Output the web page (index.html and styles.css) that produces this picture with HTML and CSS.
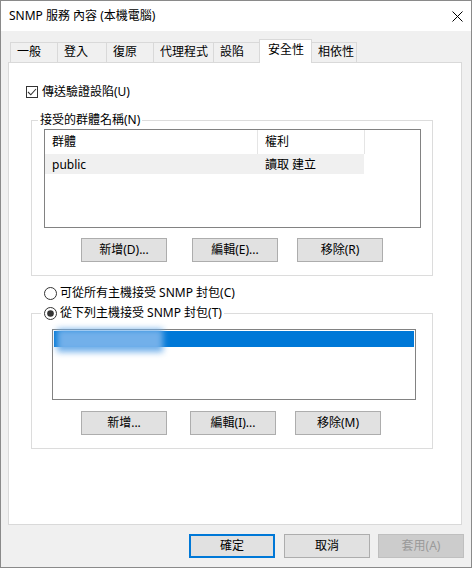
FILE: index.html
```html
<!DOCTYPE html>
<html lang="zh-Hant">
<head>
<meta charset="utf-8">
<title>SNMP 服務 內容 (本機電腦)</title>
<link rel="stylesheet" href="styles.css">
</head>
<body>
<div class="window">
  <div class="titlebar">
    <span class="title">SNMP 服務 內容 (本機電腦)</span>
    <svg class="close" width="11" height="11" viewBox="0 0 11 11"><path d="M0.5 0.5 L10.5 10.5 M10.5 0.5 L0.5 10.5" stroke="#000" stroke-width="1" fill="none"/></svg>
  </div>
  <div class="body">
    <div class="tabs">
      <div class="tab t1">一般</div>
      <div class="tab t2">登入</div>
      <div class="tab t3">復原</div>
      <div class="tab t4">代理程式</div>
      <div class="tab t5">設陷</div>
      <div class="tab t6 active">安全性</div>
      <div class="tab t7">相依性</div>
    </div>
    <div class="panel">
      <div class="check-row">
        <span class="checkbox"><svg width="12" height="12" viewBox="0 0 12 12"><path d="M2 6 L4.8 8.8 L10 3" stroke="#333" stroke-width="1.1" fill="none"/></svg></span>
        <span class="label">傳送驗證設陷(U)</span>
      </div>
      <fieldset class="group g1">
        <legend class="legend-text">接受的群體名稱(N)</legend>
        <div class="listview">
          <div class="lv-header">
            <div class="col c1">群體</div>
            <div class="col c2">權利</div>
          </div>
          <div class="lv-row">
            <div class="col c1">public</div>
            <div class="col c2">讀取 建立</div>
          </div>
        </div>
        <div class="btn-row r1">
          <button class="btn b-add1">新增(D)...</button>
          <button class="btn b-edit1">編輯(E)...</button>
          <button class="btn b-del1">移除(R)</button>
        </div>
      </fieldset>
      <div class="radio-row solo">
        <svg class="radio" width="13" height="13" viewBox="0 0 13 13"><circle cx="6.5" cy="6.5" r="6" fill="#fff" stroke="#333" stroke-width="1"/></svg>
        <span class="label">可從所有主機接受 SNMP 封包(C)</span>
      </div>
      <fieldset class="group g2">
        <legend class="radio-row legend-radio">
          <svg class="radio" width="13" height="13" viewBox="0 0 13 13"><circle cx="6.5" cy="6.5" r="6" fill="#fff" stroke="#333" stroke-width="1"/><circle cx="6.5" cy="6.5" r="3.3" fill="#333"/></svg>
          <span class="label">從下列主機接受 SNMP 封包(T)</span>
        </legend>
        <div class="listbox">
          <div class="sel"></div>
          <span class="blurred"></span>
        </div>
        <div class="btn-row r2">
          <button class="btn b-add2">新增...</button>
          <button class="btn b-edit2">編輯(I)...</button>
          <button class="btn b-del2">移除(M)</button>
        </div>
      </fieldset>
    </div>
    <div class="footer">
      <button class="btn default">確定</button>
      <button class="btn cancel">取消</button>
      <button class="btn disabled" disabled>套用(A)</button>
    </div>
  </div>
</div>
</body>
</html>
```

FILE: styles.css
```css
* { box-sizing: border-box; }
html, body { margin: 0; padding: 0; background: #fff; }
body {
  font-family: "Noto Sans", "Noto Sans CJK TC", sans-serif;
  font-size: 12px;
  color: #000;
}
.window {
  width: 472px;
  height: 568px;
  border: 1px solid #8a8a8a;
  display: flex;
  flex-direction: column;
  background: #f0f0f0;
}
.titlebar {
  height: 30px;
  flex: none;
  background: #fff;
  display: flex;
  align-items: center;
  justify-content: space-between;
  padding: 0 8px 0 8px;
}
.title { font-size: 12px; line-height: 16px; }
.close { display: block; }
.body { flex: 1; display: flex; flex-direction: column; }
.tabs {
  display: flex;
  align-items: flex-end;
  height: 23px;
  margin-top: 8px;
  margin-left: 9px;
}
.tab {
  height: 20px;
  border: 1px solid #d9d9d9;
  border-bottom: none;
  margin-right: -1px;
  padding-left: 6px;
  line-height: 18px;
  background: #f0f0f0;
  white-space: nowrap;
}
.t1 { width: 48px; }
.t2 { width: 50px; }
.t3 { width: 48px; }
.t4 { width: 61px; }
.t5 { width: 47px; }
.t6 { width: 53px; }
.t7 { width: 46px; }
.tab.active {
  height: 24px;
  margin-bottom: -1px;
  background: #fff;
  padding-left: 8px;
  line-height: 19px;
  position: relative;
  z-index: 1;
}
.panel {
  margin-left: 7px;
  width: 454px;
  height: 463px;
  border: 1px solid #d9d9d9;
  background: #fff;
  display: flex;
  flex-direction: column;
}
.check-row {
  display: flex;
  align-items: center;
  height: 16px;
  margin-top: 21px;
  padding-left: 17px;
}
.checkbox {
  width: 12px;
  height: 12px;
  border: 1px solid #333;
  display: flex;
  align-items: center;
  justify-content: center;
  margin-right: 4px;
}
.checkbox svg { display: block; flex: none; }
.label { line-height: 16px; white-space: nowrap; }
.group {
  margin: 0;
  padding: 0;
  min-width: 0;
  border: 1px solid #dcdcdc;
  width: 402px;
  margin-left: 22px;
}
.legend-text {
  line-height: 16px;
  padding: 0 2px;
  margin-left: 6px;
}
.g1 { margin-top: 12px; padding-top: 1px; padding-bottom: 13px; }
.listview {
  margin-left: 12px;
  width: 377px;
  height: 99px;
  border: 1px solid #828282;
  background: #fff;
}
.lv-header, .lv-row { display: flex; }
.lv-header { height: 24px; }
.lv-header .col { line-height: 23px; border-right: 1px solid #e5e5e5; }
.lv-row { height: 20px; width: 319px; background: #f0f0f0; }
.lv-row .col { line-height: 21px; }
.col { padding-left: 7px; white-space: nowrap; }
.col.c1 { width: 213px; }
.col.c2 { width: 107px; }
.lv-row .col.c1 { width: 213px; }
.lv-row .col.c2 { width: 106px; }
.btn-row { display: flex; }
.btn {
  font: inherit;
  font-size: 12px;
  color: #000;
  width: 86px;
  height: 24px;
  padding: 0;
  margin: 0;
  border: 1px solid #adadad;
  background: #e1e1e1;
  line-height: 20px;
  border-radius: 0;
}
.r1 { margin-top: 10px; }
.b-add1 { margin-left: 49px; }
.b-edit1 { margin-left: 25px; }
.b-del1 { margin-left: 19px; }
.radio-row {
  display: flex;
  align-items: center;
  height: 16px;
}
.radio { display: block; flex: none; margin-right: 3px; }
.solo { margin-top: 9px; padding-left: 35px; }
.g2 { margin-top: 4px; padding-top: 8px; padding-bottom: 13px; }
.legend-radio {
  padding: 0 2px 0 3px;
  margin-left: 9px;
}
.listbox {
  position: relative;
  margin-left: 20px;
  width: 364px;
  height: 71px;
  border: 1px solid #828282;
  padding: 1px;
  background: #fff;
}
.sel { height: 16px; background: #0078d7; }
.blurred {
  position: absolute;
  left: 4px;
  top: -1px;
  width: 106px;
  height: 23px;
  background: #72b0ea;
  filter: blur(3px);
}
.r2 { margin-top: 11px; }
.b-add2 { margin-left: 49px; }
.b-edit2 { margin-left: 23px; }
.b-del2 { margin-left: 19px; }
.footer {
  display: flex;
  justify-content: flex-end;
  padding-right: 7px;
  margin-top: 9px;
}
.footer .btn { margin-left: 9px; }
.footer .btn.disabled { margin-left: 8px; }
.btn.default { border: 2px solid #0078d7; }
.btn.disabled { background: #cccccc; border-color: #bfbfbf; color: #9a9a9a; }
```
